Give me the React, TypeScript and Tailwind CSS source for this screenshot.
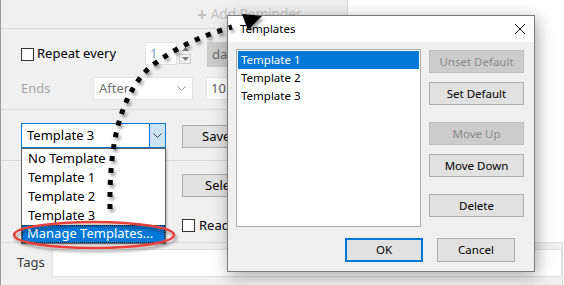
import React from 'react';

const Chevron: React.FC<{ color?: string }> = ({ color = '#606060' }) => (
  <svg width="9" height="5" viewBox="0 0 9 5">
    <polyline points="0.5,0.5 4.5,4.5 8.5,0.5" fill="none" stroke={color} strokeWidth="1" />
  </svg>
);

const Checkbox: React.FC = () => (
  <span className="w-[13px] h-[13px] border border-[#333333] bg-white shrink-0" />
);

interface WinButtonProps {
  label: string;
  disabled?: boolean;
  className?: string;
}

const WinButton: React.FC<WinButtonProps> = ({ label, disabled, className = '' }) => (
  <div
    className={`flex items-center justify-center border ${
      disabled ? 'bg-[#cccccc] border-[#bfbfbf] text-[#8a8a8a]' : 'bg-[#e1e1e1] border-[#adadad] text-black'
    } ${className}`}
  >
    {label}
  </div>
);

const TEMPLATES = ['Template 1', 'Template 2', 'Template 3'];

const TemplatesDialog: React.FC = () => (
  <div className="absolute left-[227px] top-[15px] w-[308px] h-[257px] border border-[#7a7a7a] bg-[#f0f0f0] shadow-[2px_4px_16px_rgba(0,0,0,0.35)] flex flex-col text-[11.5px] text-black">
    <div className="h-[26px] bg-white flex items-center justify-between pl-[12px] pr-[8px]">
      <span>Templates</span>
      <svg width="12" height="12" viewBox="0 0 12 12">
        <path d="M1 1 L11 11 M11 1 L1 11" stroke="#111" strokeWidth="1" />
      </svg>
    </div>
    <div className="flex pl-[8px] pt-[7px] gap-[8px]">
      <div className="w-[185px] h-[178px] border border-[#adadad] bg-white p-[1px]">
        {TEMPLATES.map((t, i) => (
          <div
            key={t}
            className={`h-[18px] flex items-center pl-[3px] ${i === 0 ? 'bg-[#0078d7] text-white' : ''}`}
          >
            {t}
          </div>
        ))}
      </div>
      <div className="w-[95px] flex flex-col pt-[1px]">
        <WinButton label="Unset Default" disabled className="h-[23px]" />
        <WinButton label="Set Default" className="h-[23px] mt-[9px]" />
        <WinButton label="Move Up" disabled className="h-[23px] mt-[17px]" />
        <WinButton label="Move Down" className="h-[23px] mt-[9px]" />
        <WinButton label="Delete" className="h-[23px] mt-[17px]" />
      </div>
    </div>
    <div className="flex justify-end gap-[14px] pr-[19px] mt-[11px]">
      <div className="w-[78px] h-[24px] flex items-center justify-center bg-[#e1e1e1] border-2 border-[#0078d7]">OK</div>
      <WinButton label="Cancel" className="w-[78px] h-[24px]" />
    </div>
  </div>
);

const TemplateDropdown: React.FC = () => (
  <div className="absolute left-[21px] top-[148px] w-[145px] h-[96px] border border-[#646464] bg-white shadow-[1px_1px_2px_rgba(0,0,0,0.25)] text-[13px] text-black">
    {['No Template', 'Template 1', 'Template 2', 'Template 3'].map((t) => (
      <div key={t} className="h-[19px] flex items-center pl-[6px]">
        {t}
      </div>
    ))}
    <div className="h-[18px] flex items-center pl-[5px] bg-[#0078d7] text-white outline-1 outline-dotted outline-[#222] -outline-offset-1">
      Manage Templates...
    </div>
  </div>
);

const Annotations: React.FC = () => (
  <svg className="absolute inset-0 pointer-events-none" width="564" height="285" viewBox="0 0 564 285">
    <defs>
      <filter id="soft" x="-20%" y="-20%" width="140%" height="140%">
        <feDropShadow dx="2" dy="3" stdDeviation="1.6" floodColor="#000" floodOpacity="0.35" />
      </filter>
    </defs>
    <ellipse cx="94" cy="235" rx="80" ry="13" fill="none" stroke="#e8413c" strokeWidth="2.5" filter="url(#soft)" />
    <g filter="url(#soft)">
      <path
        d="M110 209 C109 150 118 100 147 70 C170 50 200 36 232 27"
        fill="none"
        stroke="#000"
        strokeWidth="5"
        strokeDasharray="5 7"
      />
      <polygon points="242,14 262,16 248,30" fill="#000" />
    </g>
  </svg>
);

export default function App() {
  return (
    <div className="relative w-[564px] h-[285px] overflow-hidden bg-white font-['Noto_Sans',sans-serif] text-[13px] text-black">
      <div className="flex flex-col h-full">
        <div className="flex h-[242px]">
          <div className="w-[348px] bg-[#f0f0f0] border-l border-r border-l-[#9b9b9b] border-r-[#d9d9d9] flex flex-col">
            <div className="h-[29px] border-b border-[#dadada] flex items-center pl-[196px] text-[#c4c4c4] text-[13.5px]">
              <span className="text-[17px] leading-none mr-[4px] font-bold">+</span>
              <span>Add Reminder</span>
            </div>
            <div className="h-[81px] border-b border-[#dadada] flex flex-col">
              <div className="mt-[12px] h-[26px] flex items-start pl-[20px]">
                <div className="h-[26px] flex items-center">
                  <Checkbox />
                  <span className="ml-[3px] w-[108px]">Repeat every</span>
                </div>
                <div className="mt-[1px] w-[32px] h-[23px] bg-white border border-[#e3e3e3] flex items-center pl-[4px] text-[#7c9cc8]">1</div>
                <div className="ml-[2px] w-[12px] h-[25px] flex flex-col items-center">
                  <svg width="7" height="4" viewBox="0 0 7 4" className="mt-[6px]">
                    <polygon points="0,4 3.5,0 7,4" fill="#7a7a7a" />
                  </svg>
                  <div className="mt-[3px] w-[12px] h-[10px] border border-[#d0d0d0] flex items-center justify-center">
                    <svg width="7" height="4" viewBox="0 0 7 4">
                      <polygon points="0,0 3.5,4 7,0" fill="#7a7a7a" />
                    </svg>
                  </div>
                </div>
                <div className="ml-[16px] mt-[1px] flex-1 h-[25px] bg-[#cccccc] flex items-center pl-[5px] text-[#6a6a6a]">day</div>
              </div>
              <div className="mt-[10px] h-[23px] flex items-center pl-[20px]">
                <span className="w-[72px] text-[#a6a6a6]">Ends</span>
                <div className="w-[100px] h-[23px] bg-white border border-[#e3e3e3] flex items-center justify-between pl-[5px] pr-[6px] text-[#707070]">
                  <span>After</span>
                  <Chevron color="#a0a0a0" />
                </div>
                <div className="ml-[13px] w-[60px] h-[23px] bg-white border border-[#e3e3e3] flex items-center pl-[4px] text-[#606060]">10</div>
              </div>
            </div>
            <div className="h-[51px] border-b border-[#dadada] flex items-start pl-[20px] pt-[13px]">
              <div className="w-[145px] h-[25px] bg-white border border-[#0078d7] flex">
                <span className="flex-1 flex items-center pl-[5px]">Template 3</span>
                <div className="w-[16px] bg-[#cce4f7] border-l border-[#0078d7] flex items-center justify-center">
                  <Chevron color="#404040" />
                </div>
              </div>
              <div className="ml-[16px] mt-[2px] w-[90px] h-[23px] bg-[#e1e1e1] border border-[#adadad] flex items-center pl-[19px]">Save...</div>
            </div>
            <div className="flex-1 flex flex-col pl-[181px] pt-[13px]">
              <div className="w-[90px] h-[23px] bg-[#e1e1e1] border border-[#adadad] flex items-center pl-[22px]">Select...</div>
              <div className="mt-[19px] flex items-center">
                <Checkbox />
                <span className="ml-[4px]">Read only</span>
              </div>
            </div>
          </div>
          <div className="flex-1 bg-white" />
        </div>
        <div className="w-[563px] flex-1 bg-[#f0f0f0] border-t border-l border-r border-t-[#dadada] border-l-[#9b9b9b] border-r-[#d9d9d9] flex items-start pt-[6px] pl-[16px]">
          <span className="w-[35px] h-[28px] flex items-center text-[#333333]">Tags</span>
          <div className="flex-1 h-[28px] bg-white border border-[#e0e0e0]" />
        </div>
      </div>
      <TemplateDropdown />
      <TemplatesDialog />
      <Annotations />
    </div>
  );
}
